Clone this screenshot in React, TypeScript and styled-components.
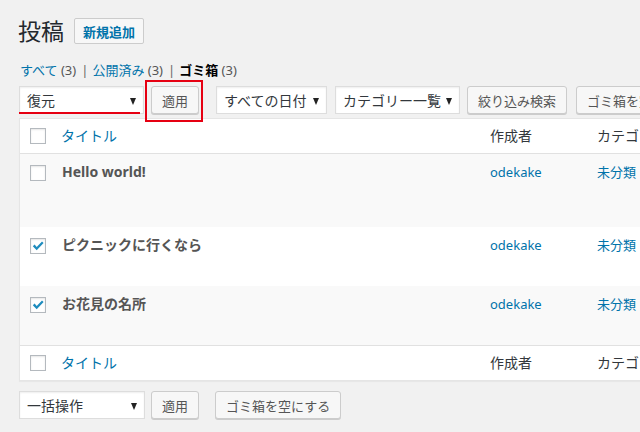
import styled, { createGlobalStyle } from "styled-components";

const GlobalStyle = createGlobalStyle`
  html, body {
    margin: 0;
    padding: 0;
    background: #f1f1f1;
    overflow: hidden;
  }
  body {
    font-family: "Noto Sans", "Noto Sans CJK JP", sans-serif;
    color: #444;
    font-size: 13px;
  }
`;

const Page = styled.div`
  width: 640px;
  height: 432px;
  overflow: hidden;
  padding: 18px 0 0 19px;
  box-sizing: border-box;
`;

const HeadRow = styled.div`
  display: flex;
  align-items: center;
  height: 26px;
`;

const Heading = styled.h1`
  margin: 0 10px 0 -1px;
  font-size: 23px;
  font-weight: 400;
  line-height: 26px;
  color: #23282d;
`;

const AddButton = styled.span`
  display: inline-flex;
  align-items: center;
  height: 24px;
  padding: 0 8px;
  border: 1px solid #ccc;
  border-radius: 2px;
  background: #f7f7f7;
  color: #0073aa;
  font-size: 13px;
  font-weight: 700;
`;

const SubSub = styled.ul`
  display: flex;
  list-style: none;
  margin: 16px 0 0 1px;
  padding: 0;
  height: 20px;
  line-height: 20px;
  font-size: 13px;
  color: #666;
`;

const SubItem = styled.li<{ $current?: boolean }>`
  color: ${({ $current }) => ($current ? "#000" : "#0073aa")};
  font-weight: ${({ $current }) => ($current ? 700 : 400)};

  span {
    color: #555;
    font-weight: 400;
  }
`;

const Sep = styled.li`
  color: #666;
  padding: 0 4px 0 5px;
`;

const Nav = styled.div<{ $top?: boolean }>`
  display: flex;
  align-items: flex-start;
  height: 28px;
  margin: ${({ $top }) => ($top ? "6px 0 4px" : "10px 0 0")};
`;

const Select = styled.div<{ $w: number; $mark?: boolean; $mr?: number }>`
  position: relative;
  display: flex;
  align-items: center;
  flex: none;
  width: ${({ $w }) => $w}px;
  height: 28px;
  margin-right: ${({ $mr }) => $mr ?? 0}px;
  padding-left: 7px;
  box-sizing: border-box;
  background: #fff;
  border: 1px solid #ddd;
  box-shadow: inset 0 1px 2px rgba(0, 0, 0, 0.07);
  color: #32373c;
  font-size: 14px;

  &::before {
    content: "";
    position: absolute;
    right: 7px;
    top: 11px;
    border-left: 3.5px solid transparent;
    border-right: 3.5px solid transparent;
    border-top: 7px solid #222;
  }

  ${({ $mark }) =>
    $mark &&
    `&::after {
      content: "";
      position: absolute;
      left: -1px;
      bottom: -1px;
      width: 121px;
      height: 2px;
      background: #e60012;
    }`}
`;

const Button = styled.span<{ $mr?: number }>`
  display: inline-flex;
  align-items: center;
  flex: none;
  height: 26px;
  padding: 0 10px;
  margin-right: ${({ $mr }) => $mr ?? 0}px;
  border: 1px solid #ccc;
  border-radius: 3px;
  background: #f7f7f7;
  box-shadow: 0 1px 0 #ccc;
  color: #555;
  font-size: 13px;
  white-space: nowrap;
`;

const RedBox = styled.span`
  display: inline-flex;
  flex: none;
  margin: -6px 13px 0 1px;
  padding: 4px 2px 6px 4px;
  border: 2px solid #e60012;
`;

const Table = styled.div`
  width: 760px;
  background: #fff;
  border: 1px solid #e5e5e5;
  box-shadow: 0 1px 1px rgba(0, 0, 0, 0.04);
`;

const Row = styled.div<{ $h: number; $bg?: string; $head?: boolean; $foot?: boolean }>`
  display: grid;
  grid-template-columns: 41px 429px 107px 1fr;
  align-items: ${({ $head, $foot }) => ($head || $foot ? "center" : "start")};
  height: ${({ $h }) => $h}px;
  background: ${({ $bg }) => $bg ?? "#fff"};
  border-bottom: ${({ $head }) => ($head ? "1px solid #e1e1e1" : "none")};
  border-top: ${({ $foot }) => ($foot ? "1px solid #e1e1e1" : "none")};
  font-size: ${({ $head, $foot }) => ($head || $foot ? 14 : 13)}px;
  line-height: 20px;
  color: #32373c;
`;

const CheckCell = styled.div<{ $head?: boolean }>`
  padding: ${({ $head }) => ($head ? "0" : "11px")} 0 0 10px;
  display: flex;
`;

const Check = styled.span`
  display: inline-flex;
  align-items: center;
  justify-content: center;
  width: 16px;
  height: 16px;
  box-sizing: border-box;
  background: #fff;
  border: 1px solid #b4b9be;
  box-shadow: inset 0 1px 2px rgba(0, 0, 0, 0.1);
`;

const Cell = styled.div<{ $head?: boolean; $link?: boolean }>`
  padding-top: ${({ $head }) => ($head ? 0 : 8)}px;
  color: ${({ $link }) => ($link ? "#0073aa" : "#32373c")};
  white-space: nowrap;
`;

const RowTitle = styled.div`
  padding: 8px 0 0 1px;
  font-size: 14px;
  font-weight: 700;
  color: #555;
  white-space: nowrap;
`;

function CheckBox({ checked = false, head = false }: { checked?: boolean; head?: boolean }) {
  return (
    <CheckCell $head={head}>
      <Check>
        {checked && (
          <svg width="14" height="14" viewBox="0 0 14 14">
            <path d="M1.8 7.2 L3.6 5.6 L5.7 8 L11 2.4 L12.6 4 L5.7 11.2 Z" fill="#1e8cbe" />
          </svg>
        )}
      </Check>
    </CheckCell>
  );
}

const posts = [
  { title: "Hello world!", checked: false, h: 73, bg: "#f9f9f9" },
  { title: "ピクニックに行くなら", checked: true, h: 59, bg: "#fff" },
  { title: "お花見の名所", checked: true, h: 59, bg: "#f9f9f9" },
];

function HeaderRow({ foot = false }: { foot?: boolean }) {
  return (
    <Row $h={34} $head={!foot} $foot={foot}>
      <CheckBox head />
      <Cell $head $link>タイトル</Cell>
      <Cell $head>作成者</Cell>
      <Cell $head>カテゴリー</Cell>
    </Row>
  );
}

export default function App() {
  return (
    <>
      <GlobalStyle />
      <Page>
        <HeadRow>
          <Heading>投稿</Heading>
          <AddButton>新規追加</AddButton>
        </HeadRow>
        <SubSub>
          <SubItem>
            すべて <span>(3)</span>
          </SubItem>
          <Sep>|</Sep>
          <SubItem>
            公開済み <span>(3)</span>
          </SubItem>
          <Sep>|</Sep>
          <SubItem $current>
            ゴミ箱 <span>(3)</span>
          </SubItem>
        </SubSub>
        <Nav $top>
          <Select $w={125} $mark>
            復元
          </Select>
          <RedBox>
            <Button>適用</Button>
          </RedBox>
          <Select $w={111} $mr={8}>
            すべての日付
          </Select>
          <Select $w={125} $mr={7}>
            カテゴリー一覧
          </Select>
          <Button $mr={9}>絞り込み検索</Button>
          <Button>ゴミ箱を空にする</Button>
        </Nav>
        <Table>
          <HeaderRow />
          {posts.map((p) => (
            <Row key={p.title} $h={p.h} $bg={p.bg}>
              <CheckBox checked={p.checked} />
              <RowTitle>{p.title}</RowTitle>
              <Cell $link>odekake</Cell>
              <Cell $link>未分類</Cell>
            </Row>
          ))}
          <HeaderRow foot />
        </Table>
        <Nav>
          <Select $w={126} $mr={6}>
            一括操作
          </Select>
          <Button $mr={16}>適用</Button>
          <Button>ゴミ箱を空にする</Button>
        </Nav>
      </Page>
    </>
  );
}
